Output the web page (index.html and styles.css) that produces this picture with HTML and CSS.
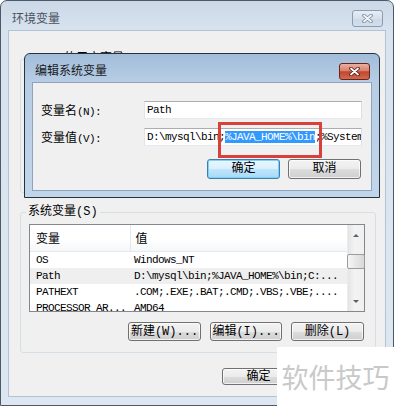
FILE: index.html
```html
<!DOCTYPE html>
<html lang="zh-CN">
<head>
    <meta charset="UTF-8">
    <meta name="viewport" content="width=device-width, initial-scale=1.0">
    <title>环境变量</title>
    <link rel="stylesheet" href="styles.css">
</head>
<body>
    <div class="window env">
        <div class="titlebar">
            <span class="title">环境变量</span>
            <div class="close inactive">
                <svg width="11" height="9" viewBox="0 0 11 9"><path d="M2 1.5L9 7.5M9 1.5L2 7.5" stroke="#7d8da0" stroke-width="3.6" stroke-linecap="round"/><path d="M2 1.5L9 7.5M9 1.5L2 7.5" stroke="#f4f7fa" stroke-width="1.8" stroke-linecap="round"/></svg>
            </div>
        </div>
        <div class="client">
            <fieldset class="group user-group">
                <legend>siyu 的用户变量(U)</legend>
                <div class="spacer"></div>
            </fieldset>
            <fieldset class="group sys-group">
                <legend>系统变量(S)</legend>
                <div class="list">
                    <div class="list-main">
                        <table>
                            <colgroup><col class="c1"><col class="c2"></colgroup>
                            <tr><th>变量</th><th>值</th></tr>
                            <tr><td>OS</td><td>Windows_NT</td></tr>
                            <tr class="current"><td>Path</td><td>D:\mysql\bin;%JAVA_HOME%\bin;C:...</td></tr>
                            <tr><td>PATHEXT</td><td>.COM;.EXE;.BAT;.CMD;.VBS;.VBE;....</td></tr>
                            <tr><td>PROCESSOR_AR...</td><td>AMD64</td></tr>
                        </table>
                    </div>
                    <div class="scrollbar">
                        <div class="arrow up"></div>
                        <div class="thumb"></div>
                        <div class="arrow down"></div>
                    </div>
                </div>
                <div class="btn-row">
                    <div class="btn w73">新建(W)...</div>
                    <div class="btn w72">编辑(I)...</div>
                    <div class="btn w73">删除(L)</div>
                </div>
            </fieldset>
            <div class="btn-row footer">
                <div class="btn w73">确定</div>
                <div class="btn w73">取消</div>
            </div>
        </div>

        <div class="window edit">
            <div class="titlebar">
                <span class="title">编辑系统变量</span>
                <div class="close active">
                    <svg width="11" height="9" viewBox="0 0 11 9"><path d="M2 1.5L9 7.5M9 1.5L2 7.5" stroke="#5a1a12" stroke-width="3.6" stroke-linecap="round"/><path d="M2 1.5L9 7.5M9 1.5L2 7.5" stroke="#ffffff" stroke-width="1.8" stroke-linecap="round"/></svg>
                </div>
            </div>
            <div class="client">
                <div class="form">
                    <label>变量名<span class="key">(N):</span></label>
                    <div class="input">Path</div>
                    <label>变量值<span class="key">(V):</span></label>
                    <div class="input">D:\mysql\bin;<span class="sel">%JAVA_HOME%\bin</span>;%SystemRoot%\system32;%SystemRoot%</div>
                </div>
                <div class="btn-row">
                    <div class="btn w73 default">确定</div>
                    <div class="btn w73">取消</div>
                </div>
            </div>
        </div>
    </div>

    <div class="mark"></div>
    <div class="watermark">软件技巧</div>
</body>
</html>
```

FILE: styles.css
```css
* {
    box-sizing: border-box;
}
body {
    margin: 0;
    width: 394px;
    height: 406px;
    overflow: hidden;
    position: relative;
    background: #fff;
    font-family: "Liberation Mono", "Noto Sans CJK SC", monospace;
    font-size: 12px;
    color: #000;
}
.window {
    position: relative;
    border: 1px solid #4e5966;
    display: flex;
    flex-direction: column;
}
.titlebar {
    display: flex;
    justify-content: space-between;
    align-items: flex-start;
    flex: none;
}
.title {
    font-family: "Noto Sans CJK SC", sans-serif;
    font-size: 12px;
    line-height: 16px;
}
.close {
    width: 31px;
    height: 17px;
    border-radius: 3px;
    display: flex;
    align-items: center;
    justify-content: center;
}
.close.inactive {
    border: 1px solid #8c9bad;
    background: linear-gradient(#e6edf4, #d5e0ec 50%, #cbd8e6 51%, #d3dfeb);
}
.close.active {
    border: 1px solid #6b2219;
    background: linear-gradient(#eab0a2, #d8826b 45%, #c2452c 52%, #d06a4f);
}

/* outer window */
.env {
    width: 394px;
    height: 406px;
    border-radius: 7px 7px 0 0;
    background: linear-gradient(#cbd8e7, #d8e3ef 30px, #dce7f2);
}
.env .titlebar {
    height: 29px;
    padding: 9px 10px 0 11px;
}
.env .title {
    color: #48525e;
}
.env > .client {
    margin: 0 7px;
    height: 367px;
    background: #f0f0f0;
    border: 1px solid #b4c3d3;
    padding: 0 8px 0 11px;
}
.group {
    margin: 0;
    width: 356px;
    border: 1px solid #d5dfe5;
    border-radius: 3px;
    padding: 0 10px 11px 8px;
}
.group legend {
    padding: 0 2px;
    margin-left: -3px;
    line-height: 14px;
}
.user-group {
    margin-top: 21px;
    padding-bottom: 10px;
}
.user-group .spacer {
    height: 116px;
}
.sys-group {
    margin-top: 12px;
}
.list {
    margin-top: 5px;
    height: 88px;
    border: 1px solid #828790;
    background: #fff;
    display: flex;
}
.list-main {
    flex: 1;
    overflow: hidden;
}
table {
    border-collapse: collapse;
    table-layout: fixed;
    width: 317px;
}
col.c1 {
    width: 100px;
}
col.c2 {
    width: 217px;
}
th {
    height: 26px;
    padding: 0 0 0 5px;
    text-align: left;
    font-weight: normal;
    font-family: "Noto Sans CJK SC", sans-serif;
    font-size: 12px;
    background: linear-gradient(#fff 55%, #f4f6f8);
    border-bottom: 1px solid #e6e9ec;
}
th:first-child {
    padding-left: 6px;
    border-right: 1px solid #e3e6ea;
}
td {
    height: 16px;
    padding: 0 0 0 4px;
    font-size: 11px;
    letter-spacing: -0.6px;
    line-height: 16px;
    white-space: nowrap;
    overflow: hidden;
}
td:first-child {
    padding-left: 6px;
}
tr.current td {
    background: #efefef;
}
.scrollbar {
    width: 17px;
    display: flex;
    flex-direction: column;
    background: linear-gradient(to right, #e4e4e4, #f3f3f3 40%, #f0f0f0);
    border-left: 1px solid #ececec;
}
.arrow {
    height: 17px;
    display: flex;
    align-items: center;
    justify-content: center;
}
.arrow::before {
    content: "";
    border-left: 3px solid transparent;
    border-right: 3px solid transparent;
}
.arrow.up {
    padding-top: 3px;
}
.arrow.up::before {
    border-bottom: 3px solid #606060;
}
.arrow.down {
    margin-top: auto;
    padding-bottom: 2px;
}
.arrow.down::before {
    border-top: 3px solid #606060;
}
.thumb {
    margin: 12px -1px 0 -1px;
    height: 15px;
    border: 1px solid #9c9c9c;
    border-radius: 2px;
    background: linear-gradient(to right, #f6f6f6, #e6e6e6 50%, #d9d9d9);
}
.btn-row {
    display: flex;
    justify-content: flex-end;
    gap: 9px;
}
.sys-group .btn-row {
    margin-top: 10px;
    margin-right: 1px;
}
.btn {
    height: 19px;
    border: 1px solid #707070;
    border-radius: 3px;
    background: linear-gradient(#f3f3f3, #ebebeb 50%, #dddddd 51%, #cfcfcf);
    box-shadow: inset 0 0 0 1px rgba(255, 255, 255, 0.7);
    display: flex;
    align-items: center;
    justify-content: center;
    font-size: 12px;
    line-height: 14px;
    white-space: nowrap;
}
.w72 {
    width: 72px;
}
.w73 {
    width: 73px;
}
.footer {
    margin-top: 15px;
}
.footer .btn {
    height: 17px;
}

/* edit dialog on top */
.edit {
    position: absolute;
    left: 23px;
    top: 52px;
    width: 356px;
    height: 145px;
    border-color: #26333f;
    border-radius: 6px 6px 0 0;
    background: linear-gradient(#a2bdda, #b7cde5 28px, #c2d6eb);
}
.edit .titlebar {
    height: 28px;
    padding: 9px 9px 0 10px;
}
.edit .title {
    margin-top: -1px;
    color: #1a1a1a;
}
.edit .client {
    margin: 0 7px;
    height: 109px;
    background: #f0f0f0;
    border: 1px solid #8ea4bc;
    padding: 18px 0 0 8px;
}
.form {
    display: grid;
    grid-template-columns: 103px 218px;
    grid-auto-rows: 18px;
    row-gap: 9px;
    align-items: center;
}
.key {
    font-size: 11px;
    letter-spacing: -0.6px;
}
.input {
    height: 18px;
    border: 1px solid;
    border-color: #abadb3 #dbdfe6 #e3e9ef #e2e3ea;
    background: #fff;
    padding-left: 2px;
    font-size: 11px;
    letter-spacing: -0.6px;
    line-height: 16px;
    white-space: nowrap;
    overflow: hidden;
}
.sel {
    background: #3399ff;
    color: #fff;
}
.edit .btn-row {
    margin-top: 13px;
    padding-right: 10px;
    gap: 8px;
}
.edit .btn {
    height: 20px;
}
.btn.default {
    border-color: #3c7fb1;
    background: linear-gradient(#eaf6fd, #d9f0fc 50%, #bee6fd 51%, #a7d9f5);
    box-shadow: inset 0 0 0 1px #7fd1f7;
}

/* annotation and watermark */
.mark {
    position: absolute;
    left: 218px;
    top: 122px;
    width: 104px;
    height: 36px;
    border: 3px solid #d8403c;
}
.watermark {
    position: absolute;
    left: 277px;
    top: 347px;
    width: 117px;
    height: 59px;
    background: #fff;
    color: #c9c9c9;
    font-family: "Noto Sans CJK SC", sans-serif;
    font-size: 27px;
    display: flex;
    align-items: center;
    justify-content: center;
}
```
